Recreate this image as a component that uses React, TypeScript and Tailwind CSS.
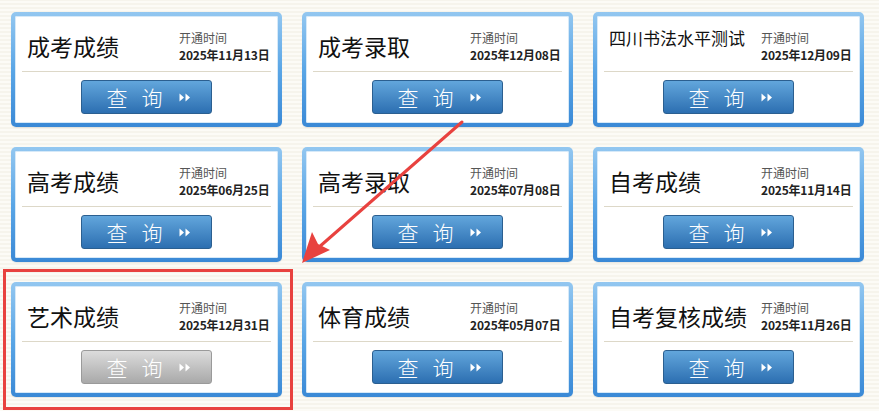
import React from 'react'

type Item = { title: string; date: string; small?: boolean; disabled?: boolean }

const items: Item[] = [
  { title: '成考成绩', date: '2025年11月13日' },
  { title: '成考录取', date: '2025年12月08日' },
  { title: '四川书法水平测试', date: '2025年12月09日', small: true },
  { title: '高考成绩', date: '2025年06月25日' },
  { title: '高考录取', date: '2025年07月08日' },
  { title: '自考成绩', date: '2025年11月14日' },
  { title: '艺术成绩', date: '2025年12月31日', disabled: true },
  { title: '体育成绩', date: '2025年05月07日' },
  { title: '自考复核成绩', date: '2025年11月26日' },
]

const font = { fontFamily: '"Noto Sans CJK SC", "Noto Sans", sans-serif' }

function Arrows() {
  return (
    <svg width="12" height="9" viewBox="0 0 12 9" className="shrink-0">
      <path d="M0.5 0.5 L5 4.5 L0.5 8.5 Z" fill="white" />
      <path d="M6.5 0.5 L11 4.5 L6.5 8.5 Z" fill="white" />
    </svg>
  )
}

function Card({ item }: { item: Item }) {
  return (
    <div className="h-[115px] rounded-[5px] bg-gradient-to-b from-[#93c7f0] via-[#5aa6e6] to-[#3a89d6] p-[4px] shadow-[0_1px_1px_rgba(0,0,0,0.08)]">
      <div className="flex h-full flex-col rounded-[2px] bg-white shadow-[inset_0_0_0_1px_#d6e9f8]">
        <div className="mx-[7px] flex h-[56px] items-center border-b border-[#ddd8c8] pt-[5px]">
          {item.small ? (
            <div className="w-[157px] shrink-0 self-start whitespace-nowrap pl-[5px] pt-[3px] text-[17px] leading-[28px] text-[#111]" style={font}>
              {item.title}
            </div>
          ) : (
            <div className="w-[157px] shrink-0 whitespace-nowrap pl-[5px] text-[23px] leading-[30px] text-[#111]" style={font}>
              {item.title}
            </div>
          )}
          <div className="flex flex-col gap-[1px] whitespace-nowrap text-[12px] leading-[16px]" style={font}>
            <span className="text-[#555]">开通时间</span>
            <span className="font-bold tracking-[-0.2px] text-[#222]">{item.date}</span>
          </div>
        </div>
        <div className="flex justify-center pt-[8px]">
          <button
            type="button"
            className={
              item.disabled
                ? 'flex h-[34px] w-[131px] items-center justify-center gap-[14px] rounded-[3px] border border-[#9a9a9a] bg-gradient-to-b from-[#dcdcdc] to-[#a9a9a9] pl-[4px] text-white'
                : 'flex h-[34px] w-[131px] items-center justify-center gap-[14px] rounded-[3px] border border-[#2b5f90] bg-gradient-to-b from-[#62a6dc] to-[#2c6fb1] pl-[4px] text-white'
            }
            style={font}
          >
            <span className="text-[21px] font-light leading-none">查</span>
            <span className="text-[21px] font-light leading-none">询</span>
            <span className="ml-[2px]">
              <Arrows />
            </span>
          </button>
        </div>
      </div>
    </div>
  )
}

export default function App() {
  return (
    <div className="relative h-[411px] w-[879px] overflow-hidden bg-[repeating-linear-gradient(0deg,#fcfbf6_0px,#fcfbf6_2px,#f6f4ec_2px,#f6f4ec_4px)]">
      <div className="grid grid-cols-[repeat(3,271px)] gap-x-[20px] gap-y-[20px] pl-[11px] pt-[12px]">
        {items.map((it) => (
          <Card key={it.title} item={it} />
        ))}
      </div>

      {/* annotation: highlight box */}
      <div className="absolute left-[3px] top-[269px] h-[141px] w-[290px] border-[3px] border-[#e8423f]" />

      {/* annotation: arrow */}
      <svg className="absolute left-0 top-0" width="879" height="411" viewBox="0 0 879 411">
        <line x1="462" y1="122" x2="318" y2="248" stroke="#e8423f" strokeWidth="3" strokeLinecap="round" />
        <path d="M302 263 L312 232 L318 244 L330 250 Z" fill="#e8423f" />
      </svg>
    </div>
  )
}
